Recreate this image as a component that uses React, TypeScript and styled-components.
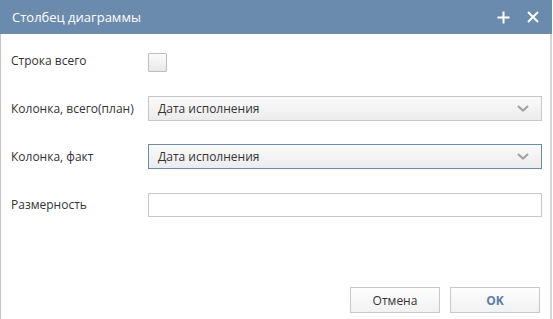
import styled, { createGlobalStyle } from 'styled-components';

const GlobalStyle = createGlobalStyle`
  html, body {
    margin: 0;
    padding: 0;
    background: #ffffff;
  }
  body {
    font-family: "Open Sans", "Liberation Sans", sans-serif;
    color: #333333;
  }
`;

const Window = styled.div`
  width: 552px;
  height: 319px;
  box-sizing: border-box;
  display: flex;
  flex-direction: column;
  background: #ffffff;
`;

const Header = styled.div`
  height: 34px;
  flex-shrink: 0;
  display: flex;
  align-items: center;
  padding: 0 12px 0 12px;
  background: #6b8bac;
  color: #ffffff;
`;

const Title = styled.div`
  flex: 1;
  font-size: 13px;
  line-height: 34px;
`;

const HeaderTools = styled.div`
  display: flex;
  align-items: center;
  gap: 17px;
`;

const ToolButton = styled.span`
  display: flex;
  width: 13px;
  height: 13px;
  cursor: pointer;
`;

const Frame = styled.div`
  flex: 1;
  display: flex;
  flex-direction: column;
  border-left: 1px solid #c4c4c4;
  border-right: 2px solid #d6d6d6;
`;

const Form = styled.div`
  flex: 1;
  display: flex;
  flex-direction: column;
  gap: 23px;
  padding: 14px 8px 0 10px;
`;

const Row = styled.div`
  display: flex;
  align-items: center;
  height: 25px;
`;

const Label = styled.div`
  width: 137px;
  flex-shrink: 0;
  font-size: 12px;
`;

const Checkbox = styled.span`
  display: block;
  width: 17px;
  height: 17px;
  margin-top: 3px;
  border: 1px solid #bdbdbd;
  border-radius: 1px;
  background: linear-gradient(#fbfbfb, #e8e8e8);
`;

const Select = styled.div<{ $focused?: boolean }>`
  flex: 1;
  height: 25px;
  box-sizing: border-box;
  display: flex;
  align-items: center;
  padding: 0 12px 0 9px;
  border: 1px solid ${p => (p.$focused ? '#6b8bac' : '#c6c6c6')};
  background: linear-gradient(#fafafa, #ececec);
  font-size: 12px;
  color: #333333;
`;

const SelectText = styled.span`
  flex: 1;
`;

const TextInput = styled.input`
  flex: 1;
  height: 24px;
  box-sizing: border-box;
  margin: 0;
  border: 1px solid #c8c8c8;
  background: #ffffff;
  font: inherit;
  outline: none;
`;

const Footer = styled.div`
  display: flex;
  justify-content: flex-end;
  gap: 10px;
  padding: 0 10px 6px 0;
`;

const Button = styled.button<{ $primary?: boolean }>`
  width: 90px;
  height: 26px;
  margin: 0;
  border: 1px solid #c8c8c8;
  background: linear-gradient(#fefefe, #f1f1f1);
  font-family: "Open Sans", "Liberation Sans", sans-serif;
  font-size: 12px;
  font-weight: ${p => (p.$primary ? 700 : 400)};
  color: ${p => (p.$primary ? '#5a7ea6' : '#333333')};
  cursor: pointer;
`;

function Chevron() {
  return (
    <svg width="12" height="7" viewBox="0 0 12 7">
      <path d="M1 1 L6 5.5 L11 1" fill="none" stroke="#a3a3a3" strokeWidth="2.2" />
    </svg>
  );
}

function PlusIcon() {
  return (
    <svg width="13" height="13" viewBox="0 0 13 13">
      <path d="M6.5 0.5 V12.5 M0.5 6.5 H12.5" stroke="#ffffff" strokeWidth="2" />
    </svg>
  );
}

function CloseIcon() {
  return (
    <svg width="12" height="12" viewBox="0 0 12 12">
      <path d="M1 1 L11 11 M11 1 L1 11" stroke="#ffffff" strokeWidth="2" />
    </svg>
  );
}

export default function App() {
  return (
    <>
      <GlobalStyle />
      <Window>
        <Header>
          <Title>Столбец диаграммы</Title>
          <HeaderTools>
            <ToolButton><PlusIcon /></ToolButton>
            <ToolButton><CloseIcon /></ToolButton>
          </HeaderTools>
        </Header>
        <Frame>
          <Form>
            <Row>
              <Label>Строка всего</Label>
              <Checkbox />
            </Row>
            <Row>
              <Label>Колонка, всего(план)</Label>
              <Select>
                <SelectText>Дата исполнения</SelectText>
                <Chevron />
              </Select>
            </Row>
            <Row>
              <Label>Колонка, факт</Label>
              <Select $focused>
                <SelectText>Дата исполнения</SelectText>
                <Chevron />
              </Select>
            </Row>
            <Row>
              <Label>Размерность</Label>
              <TextInput />
            </Row>
          </Form>
          <Footer>
            <Button>Отмена</Button>
            <Button $primary>OK</Button>
          </Footer>
        </Frame>
      </Window>
    </>
  );
}
